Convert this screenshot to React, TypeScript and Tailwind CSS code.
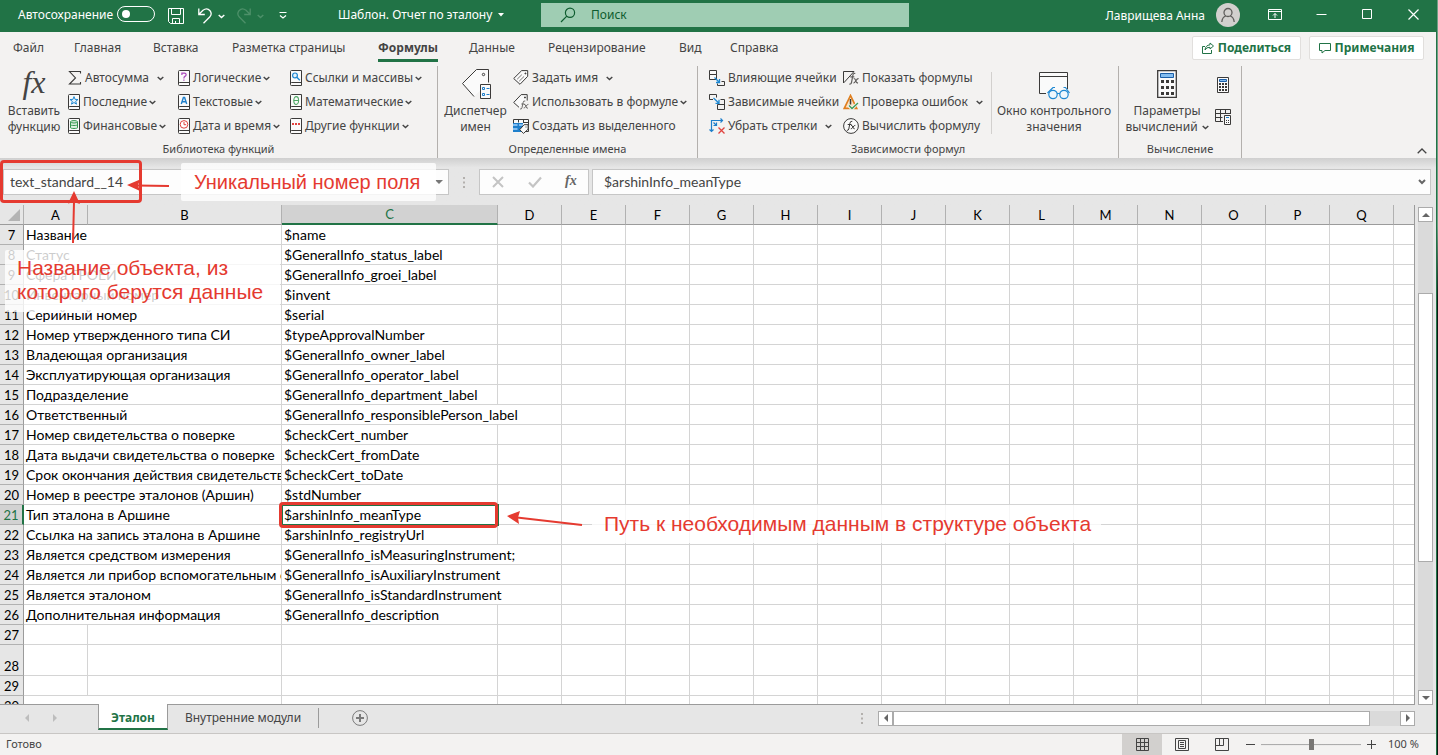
import type { ReactNode } from "react";

const UI_FONT = "font-['Noto_Sans','Open_Sans',sans-serif]";
const CELL_FONT = "font-['Lato','Open_Sans',sans-serif]";
const NOTE_FONT = "font-['Liberation_Sans',Arial,sans-serif]";

// ---------------------------------------------------------------- icons

function Chevron({ className = "" }: { className?: string }) {
  return (
    <svg viewBox="0 0 7 5" className={`h-[5px] w-[7px] shrink-0 ${className}`} fill="none" stroke="currentColor" strokeWidth="1.4">
      <path d="M.7 .9 3.5 3.6 6.3 .9" />
    </svg>
  );
}

function Triangle({ dir, className = "" }: { dir: "up" | "down" | "left" | "right"; className?: string }) {
  const paths = {
    up: "M0 6 4 2 8 6z",
    down: "M0 2 4 6 8 2z",
    left: "M6 0 2 4 6 8z",
    right: "M2 0 6 4 2 8z",
  };
  return (
    <svg viewBox="0 0 8 8" className={`size-2 shrink-0 ${className}`} fill="currentColor">
      <path d={paths[dir]} />
    </svg>
  );
}

function Book({ children }: { children: ReactNode }) {
  return (
    <svg viewBox="0 0 12 16" className="h-4 w-3 shrink-0" fill="none">
      <path d="M.5 1.5q0-1 1-1h10v15h-10q-1 0-1-1z" fill="#fafafa" stroke="#3b3a39" />
      <path d="M.5 13.5q0-1 1-1h10" stroke="#3b3a39" />
      {children}
    </svg>
  );
}

const sigmaIcon = (
  <svg viewBox="0 0 14 16" className="h-4 w-[14px] shrink-0" fill="none" stroke="#3b3a39" strokeWidth="1.1">
    <path d="M12.5 3.5v-2h-11l6 6.500-6 6h11v-2" />
  </svg>
);
const recentIcon = (
  <Book>
    <path d="M6 2.6 7.1 5.4 10 5.5 7.7 7.3 8.5 10.2 6 8.5 3.5 10.2 4.3 7.3 2 5.5 4.9 5.4z" stroke="#1e88d2" fill="#e3f1fb" />
  </Book>
);
const financeIcon = (
  <Book>
    <g stroke="#33964e" fill="#dff2e2">
      <path d="M2.5 3.8v6c0 .9 7 .9 7 0v-6" />
      <ellipse cx="6" cy="3.8" rx="3.5" ry="1.2" />
      <path d="M2.5 6.8c0 .9 7 .9 7 0" fill="none" />
    </g>
  </Book>
);
const logicIcon = (
  <Book>
    <path d="M3.9 5V3.2h2.6c2 0 2.2 2.4.4 3.2q-1 .5-1 2M5.9 9.4v1.4" stroke="#a846b9" strokeWidth="1.2" />
  </Book>
);
const textIcon = (
  <Book>
    <path d="M3.3 10 5.4 3.5h1.2L8.7 10M4.2 7.7h3.7" stroke="#1e7fcb" strokeWidth="1.4" />
  </Book>
);
const dateIcon = (
  <Book>
    <circle cx="6" cy="6.4" r="3.8" stroke="#e0433f" fill="#fff" />
    <path d="M6 4v2.7h2.2" stroke="#e0433f" />
  </Book>
);
const lookupIcon = (
  <Book>
    <circle cx="5" cy="5.4" r="2.4" stroke="#1e88d2" strokeWidth="1.2" fill="#e3f1fb" />
    <path d="M6.8 7.2 9.8 10.3" stroke="#1e88d2" strokeWidth="1.4" />
  </Book>
);
const mathIcon = (
  <Book>
    <ellipse cx="6.2" cy="6.5" rx="2.4" ry="3.9" stroke="#4fa866" strokeWidth="1.1" />
    <path d="M3.8 6.5h4.8" stroke="#4fa866" />
  </Book>
);
const moreIcon = (
  <Book>
    <path d="M2 5h2v2H2zM5 5h2v2H5zM8 5h2v2H8z" fill="#e0433f" />
  </Book>
);

const defineNameIcon = (
  <svg viewBox="0 0 16 16" className="size-4 shrink-0" fill="none" stroke="#3b3a39">
    <path d="M.7 8.5 8.7 .6h6v5.7L7 14.3z" fill="#fafafa" />
    <path d="M12 3h.9v.9H12z" />
    <path d="M4.2 9.2l4.6-4.5M6.2 11.2l4.9-4.8" stroke="#797775" />
  </svg>
);
const useInFormulaIcon = (
  <svg viewBox="0 0 16 16" className="size-4 shrink-0" fill="none" stroke="#3b3a39">
    <path d="M6 13.3.7 8.5 8.2 .6h6v6" fill="#fafafa" />
    <path d="M11.5 3h.9v.9h-.9z" />
    <path d="M12.3 7q-2-.6-2.3 1.8l-1 4.900q-.4 1.7-1.9 1.3M8.3 10h3M11 10.3q1.4-.3 1.9 2t2.1 1.9M15.4 10.4q-1-.3-2.4 1.8T10.7 14" stroke="#605e5c" strokeWidth=".9" />
  </svg>
);
const fromSelectionIcon = (
  <svg viewBox="0 0 16 16" className="size-4 shrink-0" fill="none">
    <path d="M.5 1.5h15v12H.5z" fill="#fafafa" stroke="#3b3a39" />
    <path d="M5.5 1.5v3M10.5 1.5v3M10 4.5h5.5" stroke="#3b3a39" />
    <path d="M0 5h10v9H0z" fill="#1e7fcb" />
    <path d="M0 6h4.500v2H0zM6 6h4v2H6zM0 10h4.500v2H0z" fill="#83bdf0" />
    <path d="m6.7 11.7 4.4-5h4v4.5l-4.600 4.2z" fill="#fafafa" stroke="#3b3a39" />
    <path d="M12.5 8.5h1v1h-1z" fill="#3b3a39" />
  </svg>
);
const precedentsIcon = (
  <svg viewBox="0 0 16 16" className="size-4 shrink-0" fill="none">
    <path d="M.5.5h7v4h-7zM.5 4.5h7v5h-7z" stroke="#3b3a39" fill="#fafafa" />
    <path d="M12.5 11.5h3v4h-7v-2" stroke="#3b3a39" />
    <path d="m5.5 7.5 5 5M10.5 9v3.5H7" stroke="#1e88d2" strokeWidth="1.3" />
  </svg>
);
const dependentsIcon = (
  <svg viewBox="0 0 16 16" className="size-4 shrink-0" fill="none">
    <path d="M4 5.5H.5v-5h7v3" stroke="#3b3a39" />
    <path d="M11.500 5.5h4v10h-7v-5h7" stroke="#3b3a39" />
    <path d="M4.5 4 10 9.3M10 5.8v3.5H6.5" stroke="#1e88d2" strokeWidth="1.3" />
  </svg>
);
const removeArrowsIcon = (
  <svg viewBox="0 0 16 16" className="size-4 shrink-0" fill="none">
    <path d="M2.5 14V2.5H14M11.5.5l2 2-2 2M.5 11.5l2 2 2-2M4.5 4.5l3 3M7.5 4.5v3h-3" stroke="#1e7fcb" strokeWidth="1.2" />
    <path d="m9.5 9.5 6 6m0-6-6 6" stroke="#e0433f" strokeWidth="1.3" />
  </svg>
);
const showFormulasIcon = (
  <svg viewBox="0 0 16 16" className="size-4 shrink-0" fill="none" stroke="#3b3a39">
    <path d="M.5 13V1.5H11M.8 12.8 11 1.5" />
    <path d="M12.3 3.5q-2-.8-2.5 2l-1.3 7q-.5 2-2.2 1.5M7.3 6.8h4M10.7 8.5q1.6-.2 2 2t2.3 2.7M15.6 8.7q-1.2-.4-2.7 2t-2.5 2.3" stroke="#605e5c" strokeWidth="1.2" />
  </svg>
);
const errorCheckIcon = (
  <svg viewBox="0 0 16 16" className="size-4 shrink-0" fill="none">
    <path d="M7.5 1.5 1.3 14.3h12.400z" fill="#fce3c6" stroke="#e07f1f" strokeWidth="1.700" />
    <path d="M7.5 5v5.5" stroke="#3b3a39" strokeWidth="1.5" />
    <path d="m5.5 11.5 3.5 3.500 6-6.5" stroke="#f3f2f1" strokeWidth="3" />
    <path d="m6 11.5 3 3 6-5.5" stroke="#3a9b57" strokeWidth="1.3" />
  </svg>
);
const evaluateIcon = (
  <svg viewBox="0 0 16 16" className="size-4 shrink-0" fill="none" stroke="#3b3a39">
    <circle cx="8" cy="8" r="7.4" fill="#fafafa" />
    <path d="M9.3 3.3q-2-.4-2.4 2L5.8 11q-.4 1.7-2 1.3M4.7 6.5h3.8M8 7.3q1.3-.2 1.8 1.7t1.9 1.8M12.3 7.4q-1-.3-2.3 1.7T7.8 10.8" />
  </svg>
);
const bigTagIcon = (
  <svg viewBox="0 0 32 32" className="size-8" fill="none" stroke="#3b3a39">
    <path d="m14 28.500-11.500-13 14-14h12v13" fill="#fafafa" />
    <circle cx="23.5" cy="6.5" r="1.2" />
    <path d="M20.5 16.5h10v14h-10z" fill="#fafafa" />
    <path d="M22.5 19.5h2v2h-2zM22.5 25.5h2v2h-2zM26.5 20.5h3M26.5 26.5h3" stroke="#1e7fcb" />
  </svg>
);
const watchIcon = (
  <svg viewBox="0 0 32 32" className="size-8" fill="none">
    <path d="M8 25.5H1.5v-21h28V21" fill="#fafafa" stroke="#3b3a39" />
    <path d="M1.5 8.5h28" stroke="#3b3a39" />
    <g stroke="#1e88d2" strokeWidth="1.2">
      <circle cx="15" cy="26.5" r="4.2" fill="#eef7fd" />
      <circle cx="26" cy="26.5" r="4.2" fill="#eef7fd" />
      <path d="M19 25.500h3M9.5 25l5.500-5.500h2M31.5 25l-4-5.5h-2" />
    </g>
  </svg>
);
const bigCalcIcon = (
  <svg viewBox="0 0 20 28" className="h-7 w-5" fill="none">
    <path d="M.7.7h18.600v26.600H.7z" fill="#fafafa" stroke="#3b3a39" strokeWidth="1.3" />
    <path d="M3.5 3.5h13v4h-13z" fill="#83bdf0" stroke="#1b5fa8" />
    <path
      d="M4 10h3v3H4zM9 10h3v3H9zM14 10h3v3h-3zM4 16h3v3H4zM9 16h3v3H9zM14 16h3v3h-3zM4 22h3v3H4zM9 22h3v3H9zM14 22h3v3h-3z"
      fill="#3b3a39"
    />
  </svg>
);
const smallCalcIcon = (
  <svg viewBox="0 0 12 16" className="h-4 w-3" fill="none">
    <path d="M.5.5h11v15H.5z" fill="#fafafa" stroke="#3b3a39" />
    <path d="M2.5 2.5h7v2h-7z" fill="#83bdf0" stroke="#1b5fa8" />
    <path
      d="M2 6h2v2H2zM5 6h2v2H5zM8 6h2v2H8zM2 9h2v2H2zM5 9h2v2H5zM8 9h2v2H8zM2 12h2v2H2zM5 12h2v2H5zM8 12h2v2H8z"
      fill="#3b3a39"
    />
  </svg>
);
const calcSheetIcon = (
  <svg viewBox="0 0 16 16" className="size-4" fill="none" stroke="#3b3a39">
    <path d="M8 12.5H.5V.5h15V5M.5 4.5h15M.5 8.5h7M5.5.5v12M10.5.5V5" />
    <path d="M9.5 6.5h6v9h-6z" fill="#fafafa" />
    <path d="M11 8.5h3" stroke="#1e7fcb" />
    <path d="M11 11h1v1h-1zM13 11h1v1h-1zM11 13h1v1h-1zM13 13h1v1h-1z" fill="#3b3a39" stroke="none" />
  </svg>
);

// ---------------------------------------------------------------- title bar

function TitleBar() {
  return (
    <header className="flex h-8 shrink-0 items-center bg-[#217346] text-xs text-white">
      <div className="flex w-[541px] shrink-0 items-center pl-[18px]">
        <label htmlFor="autosave" className="w-[99px] pb-0.5">Автосохранение</label>
        <input
          id="autosave"
          type="checkbox"
          className="mb-1 flex h-4 w-[38px] appearance-none items-center rounded-full border border-white pl-1 before:size-2 before:rounded-full before:bg-white"
        />
        <button type="button" aria-label="Сохранить" className="ml-[13px]">
          <svg viewBox="0 0 16 16" className="size-4" fill="none" stroke="currentColor">
            <path d="M.5.5h15v15h-13l-2-2zM3.5.5v6h9v-6M4.5 15.5v-5h7v5M7.5 13v2.5" />
          </svg>
        </button>
        <button type="button" aria-label="Отменить" className="ml-[14px] flex items-center gap-[6px]">
          <svg viewBox="0 0 14 16" className="h-4 w-[14px]" fill="none" stroke="currentColor" strokeWidth="1.3">
            <path d="M.8.5v6h6M1 6.3l4-4q4-3 7 .4 2.5 3.5-.3 6.3l-6.200 6.300" />
          </svg>
          <Chevron />
        </button>
        <button type="button" aria-label="Повторить" disabled className="ml-3 flex items-center gap-[6px] text-[#4d9069]">
          <svg viewBox="0 0 14 16" className="h-4 w-[14px]" fill="none" stroke="currentColor" strokeWidth="1.3">
            <path d="M13.2.5v6h-6M13 6.3l-4-4q-4-3-7 .4-2.500 3.500.3 6.300l6.200 6.300" />
          </svg>
          <Chevron />
        </button>
        <button type="button" aria-label="Настройка панели быстрого доступа" className="mb-0.5 ml-[15px]">
          <svg viewBox="0 0 8 8" className="size-2" fill="none" stroke="currentColor">
            <path d="M.5 1.5h7M1 4.5l3 2.5 3-2.5" strokeWidth="1.2" />
          </svg>
        </button>
        <button type="button" className="ml-[51px] flex items-center gap-[6px] whitespace-nowrap pb-0.5">
          Шаблон. Отчет по эталону
          <svg viewBox="0 0 6 4" className="h-1 w-[6px]" fill="currentColor"><path d="M0 0h6L3 3.5z" /></svg>
        </button>
      </div>
      <label className="mb-0.5 flex h-6 max-w-[368px] flex-1 items-center bg-[#9fcdb3] pl-[19px] text-[#0e5c2f]">
        <svg viewBox="0 0 16 16" className="size-4" fill="none" stroke="currentColor" strokeWidth="1.2">
          <circle cx="10" cy="5.8" r="4.6" />
          <path d="M6.8 9.2 1 15" />
        </svg>
        <input
          type="text"
          aria-label="Поиск"
          placeholder="Поиск"
          className="ml-[15px] min-w-0 flex-1 bg-transparent outline-none placeholder:text-[#0e5c2f]"
        />
      </label>
      <div className="ml-auto flex items-center pr-[17px]">
        <span className="mr-[11px] whitespace-nowrap">Лаврищева Анна</span>
        <button type="button" aria-label="Учётная запись" className="mb-0.5 flex size-6 items-center justify-center rounded-full bg-[#d2d0ce] text-[#605e5c]">
          <svg viewBox="0 0 16 16" className="size-4" fill="none" stroke="currentColor" strokeWidth="1.3">
            <circle cx="8" cy="5.5" r="4" />
            <path d="M1.8 15q.5-5 4-6M14.2 15q-.5-5-4-6" />
          </svg>
        </button>
        <button type="button" aria-label="Параметры отображения ленты" className="mb-1 ml-7">
          <svg viewBox="0 0 14 11" className="h-[11px] w-[14px]" fill="none" stroke="currentColor">
            <path d="M.5.5h13v10H.5zM.5 2.5h13M7 9V4.500M5 6.500l2-2 2 2" />
          </svg>
        </button>
        <button type="button" aria-label="Свернуть" className="mb-1 ml-[34px]">
          <svg viewBox="0 0 11 11" className="size-[11px]" fill="none" stroke="currentColor"><path d="M.5 5.5h10" /></svg>
        </button>
        <button type="button" aria-label="Развернуть" className="mb-1 ml-[35px]">
          <svg viewBox="0 0 11 11" className="size-[11px]" fill="none" stroke="currentColor"><path d="M.5.5h9v9h-9z" /></svg>
        </button>
        <button type="button" aria-label="Закрыть" className="mb-1 ml-[35px]">
          <svg viewBox="0 0 11 11" className="size-[11px]" fill="none" stroke="currentColor" strokeWidth="1.2"><path d="m.5.5 10 10m0-10-10 10" /></svg>
        </button>
      </div>
    </header>
  );
}

// ---------------------------------------------------------------- ribbon tabs

const TABS = [
  { label: "Файл", width: "w-[61px]" },
  { label: "Главная", width: "w-[79px]" },
  { label: "Вставка", width: "w-[79px]" },
  { label: "Разметка страницы", width: "w-[146px]" },
  { label: "Формулы", width: "w-[91px]", active: true },
  { label: "Данные", width: "w-[79px]" },
  { label: "Рецензирование", width: "w-[131px]" },
  { label: "Вид", width: "w-[51px]" },
  { label: "Справка", width: "w-[60px]" },
];

function RibbonTabs() {
  return (
    <nav className="flex h-8 shrink-0 items-center pl-[13px] text-xs text-[#444]">
      {TABS.map((tab) => (
        <div key={tab.label} className={`flex h-7 shrink-0 items-end ${tab.width}`}>
          <button
            type="button"
            className={
              tab.active
                ? "h-[26px] whitespace-nowrap border-b-3 border-[#217346] font-bold"
                : "h-[26px] whitespace-nowrap border-b-3 border-transparent"
            }
          >
            {tab.label}
          </button>
        </div>
      ))}
      <div className="ml-auto flex gap-2 pr-3 font-bold text-[#217346]">
        <button type="button" className="flex h-6 w-[109px] items-center justify-center gap-1 rounded-xs border border-[#e1dfdd] bg-white">
          <svg viewBox="0 0 12 12" className="size-3" fill="none" stroke="currentColor">
            <path d="M3 4.5H.5v7h9V8M8 1l3.5 3L8 7V5.3Q4.5 5 3 8q.5-4.8 5-5.2z" />
          </svg>
          Поделиться
        </button>
        <button type="button" className="flex h-6 w-[115px] items-center justify-center gap-1 rounded-xs border border-[#e1dfdd] bg-white">
          <svg viewBox="0 0 12 12" className="size-3" fill="none" stroke="currentColor">
            <path d="M.5 1.5h11v7H6L3 11V8.5H.5z" />
          </svg>
          Примечания
        </button>
      </div>
    </nav>
  );
}

// ---------------------------------------------------------------- ribbon

interface ToolProps {
  icon: ReactNode;
  label: string;
  menu?: boolean;
  wide?: boolean;
}

function Tool({ icon, label, menu, wide }: ToolProps) {
  return (
    <button type="button" className="flex h-6 items-center whitespace-nowrap">
      <span className="mr-[3px] flex">{icon}</span>
      {label}
      {menu && <Chevron className={wide ? "ml-2" : "ml-0.5"} />}
    </button>
  );
}

function ToolColumn({ tools, width }: { tools: ToolProps[]; width: string }) {
  return (
    <div className={`flex shrink-0 flex-col items-start ${width}`}>
      {tools.map((tool) => (
        <Tool key={tool.label} {...tool} />
      ))}
    </div>
  );
}

function BigTool({ icon, lines, menu, width }: { icon: ReactNode; lines: [string, string]; menu?: boolean; width: string }) {
  return (
    <button type="button" className={`flex shrink-0 flex-col items-center whitespace-nowrap pt-0.5 leading-4 ${width}`}>
      <span className="flex h-8 items-center">{icon}</span>
      <span className="mt-[3px]">{lines[0]}</span>
      <span className="flex items-center gap-1">
        {lines[1]}
        {menu && <Chevron />}
      </span>
    </button>
  );
}

function Group({ title, width, children }: { title: string; width: string; children: ReactNode }) {
  return (
    <section className={`flex shrink-0 flex-col border-r border-[#b3b0ad] ${width}`}>
      <div className="flex h-[76px]">{children}</div>
      <h2 className="text-center text-[11px] leading-[18px]">{title}</h2>
    </section>
  );
}

const LIBRARY_1: ToolProps[] = [
  { icon: sigmaIcon, label: "Автосумма", menu: true, wide: true },
  { icon: recentIcon, label: "Последние", menu: true },
  { icon: financeIcon, label: "Финансовые", menu: true },
];
const LIBRARY_2: ToolProps[] = [
  { icon: logicIcon, label: "Логические", menu: true },
  { icon: textIcon, label: "Текстовые", menu: true },
  { icon: dateIcon, label: "Дата и время", menu: true },
];
const LIBRARY_3: ToolProps[] = [
  { icon: lookupIcon, label: "Ссылки и массивы", menu: true },
  { icon: mathIcon, label: "Математические", menu: true },
  { icon: moreIcon, label: "Другие функции", menu: true },
];
const NAMES: ToolProps[] = [
  { icon: defineNameIcon, label: "Задать имя", menu: true, wide: true },
  { icon: useInFormulaIcon, label: "Использовать в формуле", menu: true },
  { icon: fromSelectionIcon, label: "Создать из выделенного" },
];
const AUDIT_1: ToolProps[] = [
  { icon: precedentsIcon, label: "Влияющие ячейки" },
  { icon: dependentsIcon, label: "Зависимые ячейки" },
  { icon: removeArrowsIcon, label: "Убрать стрелки", menu: true, wide: true },
];
const AUDIT_2: ToolProps[] = [
  { icon: showFormulasIcon, label: "Показать формулы" },
  { icon: errorCheckIcon, label: "Проверка ошибок", menu: true, wide: true },
  { icon: evaluateIcon, label: "Вычислить формулу" },
];

const fxIcon = <span className="pb-1 font-['Liberation_Serif',serif] text-[32px] italic leading-8">fx</span>;

function Ribbon() {
  return (
    <div className="flex h-[94px] shrink-0 pt-0.5 text-xs text-[#444]">
      <Group title="Библиотека функций" width="w-[438px]">
        <BigTool icon={fxIcon} lines={["Вставить", "функцию"]} width="w-[68px]" />
        <ToolColumn tools={LIBRARY_1} width="w-[110px]" />
        <ToolColumn tools={LIBRARY_2} width="w-[112px]" />
        <ToolColumn tools={LIBRARY_3} width="w-[147px]" />
      </Group>
      <Group title="Определенные имена" width="w-[260px]">
        <BigTool icon={bigTagIcon} lines={["Диспетчер", "имен"]} width="w-[75px]" />
        <ToolColumn tools={NAMES} width="w-[184px]" />
      </Group>
      <Group title="Зависимости формул" width="w-[421px]">
        <div className="w-[11px]" />
        <ToolColumn tools={AUDIT_1} width="w-[134px]" />
        <ToolColumn tools={AUDIT_2} width="w-[148px]" />
        <div className="my-1.5 w-px bg-[#d2d0ce]" />
        <BigTool icon={watchIcon} lines={["Окно контрольного", "значения"]} width="w-[124px]" />
      </Group>
      <Group title="Вычисление" width="w-[123px]">
        <BigTool icon={bigCalcIcon} lines={["Параметры", "вычислений"]} menu width="w-[96px]" />
        <div className="flex flex-col gap-4 pt-[11px]">
          <button type="button" aria-label="Пересчет" className="flex size-4 items-center justify-center">{smallCalcIcon}</button>
          <button type="button" aria-label="Произвести вычисления">{calcSheetIcon}</button>
        </div>
      </Group>
      <button type="button" aria-label="Свернуть ленту" className="mb-1 ml-auto self-end pr-[9px]">
        <svg viewBox="0 0 10 6" className="h-[6px] w-[10px]" fill="none" stroke="currentColor" strokeWidth="1.3">
          <path d="M.7 5.3 5 1l4.3 4.3" />
        </svg>
      </button>
    </div>
  );
}

// ---------------------------------------------------------------- formula bar

function GripDots() {
  return (
    <svg viewBox="0 0 2 11" className="h-[11px] w-0.5 shrink-0" fill="#b3b0ad">
      <path d="M0 0h2v2H0zM0 4.5h2v2H0zM0 9h2v2H0z" />
    </svg>
  );
}

function FormulaBar() {
  return (
    <div className={`flex h-[47px] shrink-0 items-start bg-linear-to-b from-[#cfcfcf] to-[#e6e6e6] to-20% pl-[3px] pr-[5px] pt-[11px] text-sm text-[#444] ${CELL_FONT}`}>
      <div className="flex h-[26px] w-[446px] shrink-0 items-center border border-[#c6c6c6] bg-[#fdfdfd] pl-1.5 pr-[5px]">
        <input aria-label="Имя" defaultValue="text_standard__14" className="min-w-0 flex-1 bg-transparent outline-none" />
        <button type="button" aria-label="Список имен"><Triangle dir="down" className="text-[#777]" /></button>
      </div>
      <div className="flex h-[26px] w-[30px] shrink-0 items-center justify-center"><GripDots /></div>
      <div className="mr-[3px] flex h-[26px] w-[110px] shrink-0 items-center border border-[#c6c6c6] bg-[#fdfdfd] pl-3">
        <button type="button" aria-label="Отмена" disabled>
          <svg viewBox="0 0 12 12" className="size-3" stroke="#c4c4c4" strokeWidth="2"><path d="m1 1 10 10m0-10L1 11" /></svg>
        </button>
        <button type="button" aria-label="Ввод" disabled className="ml-6">
          <svg viewBox="0 0 14 12" className="h-3 w-[14px]" fill="none" stroke="#c4c4c4" strokeWidth="2.2"><path d="m1 6.5 4 4 8-9" /></svg>
        </button>
        <button type="button" aria-label="Вставить функцию" className="ml-[23px] pb-0.5 font-['Liberation_Serif',serif] text-sm font-bold italic leading-5 text-[#666]">
          fx
        </button>
      </div>
      <div className="flex h-[26px] min-w-0 flex-1 items-center border border-[#c6c6c6] bg-[#fdfdfd] pl-[11px] pr-1">
        <input aria-label="Строка формул" defaultValue="$arshinInfo_meanType" className="min-w-0 flex-1 bg-transparent outline-none" />
        <button type="button" aria-label="Развернуть строку формул">
          <svg viewBox="0 0 8 6" className="h-[6px] w-2" fill="none" stroke="#666" strokeWidth="2"><path d="m1 1 3 3 3-3" /></svg>
        </button>
      </div>
    </div>
  );
}

// ---------------------------------------------------------------- sheet

interface SheetRow {
  n: number;
  label?: string;
  path?: string;
  overflows?: boolean;
}

const ROWS: SheetRow[] = [
  { n: 7, label: "Название", path: "$name" },
  { n: 8, label: "Статус", path: "$GeneralInfo_status_label" },
  { n: 9, label: "Сфера ГРОЕИ", path: "$GeneralInfo_groei_label" },
  { n: 10, label: "Инвентарный номер", path: "$invent" },
  { n: 11, label: "Серийный номер", path: "$serial" },
  { n: 12, label: "Номер утвержденного типа СИ", path: "$typeApprovalNumber" },
  { n: 13, label: "Владеющая организация", path: "$GeneralInfo_owner_label" },
  { n: 14, label: "Эксплуатирующая организация", path: "$GeneralInfo_operator_label" },
  { n: 15, label: "Подразделение", path: "$GeneralInfo_department_label" },
  { n: 16, label: "Ответственный", path: "$GeneralInfo_responsiblePerson_label", overflows: true },
  { n: 17, label: "Номер свидетельства о поверке", path: "$checkCert_number" },
  { n: 18, label: "Дата выдачи свидетельства о поверке", path: "$checkCert_fromDate" },
  { n: 19, label: "Срок окончания действия свидетельства", path: "$checkCert_toDate" },
  { n: 20, label: "Номер в реестре эталонов (Аршин)", path: "$stdNumber" },
  { n: 21, label: "Тип эталона в Аршине", path: "$arshinInfo_meanType" },
  { n: 22, label: "Ссылка на запись эталона в Аршине", path: "$arshinInfo_registryUrl" },
  { n: 23, label: "Является средством измерения", path: "$GeneralInfo_isMeasuringInstrument;", overflows: true },
  { n: 24, label: "Является ли прибор вспомогательным с", path: "$GeneralInfo_isAuxiliaryInstrument", overflows: true },
  { n: 25, label: "Является эталоном", path: "$GeneralInfo_isStandardInstrument", overflows: true },
  { n: 26, label: "Дополнительная информация", path: "$GeneralInfo_description" },
  { n: 27 },
  { n: 28 },
  { n: 29 },
  { n: 30, label: "" },
];

const SELECTED_ROW = 21;
const PLAIN_COLUMNS = ["D", "E", "F", "G", "H", "I", "J", "K", "L", "M", "N", "O", "P", "Q"];
const CELL = "border-b border-r border-[#d4d4d4] p-0";
const COL_HEAD = "h-5 border-b border-r border-b-[#9b9b9b] border-r-[#b1b1b1] p-0 font-normal";

function Sheet() {
  return (
    <table className={`w-full table-fixed border-separate border-spacing-0 text-sm leading-[18px] text-black ${CELL_FONT}`}>
      <colgroup>
        <col className="w-6" />
        <col className="w-16" />
        <col className="w-[194px]" />
        <col className="w-[216px]" />
        {PLAIN_COLUMNS.map((c) => (
          <col key={c} className="w-16" />
        ))}
        <col />
      </colgroup>
      <thead className="bg-[#e6e6e6] text-[13px]">
        <tr>
          <th className={COL_HEAD} aria-label="Выделить все">
            <svg viewBox="0 0 12 12" className="ml-2 size-3" fill="#b4b4b4"><path d="M12 0v12H0z" /></svg>
          </th>
          <th className={COL_HEAD}>A</th>
          <th className={COL_HEAD}>B</th>
          <th className="h-5 border-b-2 border-r border-b-[#217346] border-r-[#b1b1b1] bg-[#d2d2d2] p-0 font-normal text-[#217346]">C</th>
          {PLAIN_COLUMNS.map((c) => (
            <th key={c} className={COL_HEAD}>{c}</th>
          ))}
          <th className="h-5 border-b border-[#9b9b9b] p-0" />
        </tr>
      </thead>
      <tbody>
        {ROWS.map((row) => (
          <tr key={row.n} className={row.n === 28 ? "h-[31px] align-bottom" : "h-5 align-bottom"}>
            <th
              className={
                row.n === SELECTED_ROW
                  ? "border-b border-r-2 border-b-[#b1b1b1] border-r-[#217346] bg-[#d2d2d2] p-0 text-[13px] font-normal text-[#217346]"
                  : "border-b border-r border-b-[#b1b1b1] border-r-[#9b9b9b] bg-[#e6e6e6] p-0 text-[13px] font-normal"
              }
            >
              {row.n}
            </th>
            {row.label === undefined ? (
              <>
                <td className={CELL} />
                <td className={CELL} />
              </>
            ) : (
              <td colSpan={2} className={`${CELL} overflow-hidden whitespace-nowrap pl-0.5`}>{row.label}</td>
            )}
            <td className={`border-b border-[#d4d4d4] p-0 pl-0.5 whitespace-nowrap ${row.overflows ? "" : "border-r"}`}>
              {row.path}
            </td>
            {PLAIN_COLUMNS.map((c) => (
              <td key={c} className={CELL} />
            ))}
            <td className="border-b border-[#d4d4d4] p-0" />
          </tr>
        ))}
      </tbody>
    </table>
  );
}

const SCROLL_BUTTON = "flex items-center justify-center border border-[#ababab] bg-white text-[#666]";

function VerticalScroll() {
  return (
    <div className="flex w-[21px] shrink-0 flex-col pl-[3px] pr-[3px] pt-0.5">
      <button type="button" aria-label="Вверх" className={`h-[15px] shrink-0 ${SCROLL_BUTTON}`}><Triangle dir="up" /></button>
      <div className="flex flex-1 flex-col bg-[#dadada]">
        <div className="grow-[71]" />
        <div className="grow-[269] border border-[#ababab] bg-white" />
        <div className="grow-[129]" />
      </div>
      <button type="button" aria-label="Вниз" className={`h-[15px] shrink-0 ${SCROLL_BUTTON}`}><Triangle dir="down" /></button>
    </div>
  );
}

function SheetTabs() {
  return (
    <div className="flex h-7 shrink-0 items-start pr-[21px] text-xs text-[#444]">
      <div className="flex h-[26px] w-[98px] shrink-0 items-center gap-5 pl-[23px] text-[#bdbdbd]">
        <button type="button" aria-label="Предыдущий лист" disabled><Triangle dir="left" /></button>
        <button type="button" aria-label="Следующий лист" disabled><Triangle dir="right" /></button>
      </div>
      <button type="button" className="-mt-px h-[26px] w-[70px] border-x border-b-2 border-x-[#9b9b9b] border-b-[#217346] bg-white pt-1 font-bold text-[#217346]">
        Эталон
      </button>
      <button type="button" className="h-[26px] w-[150px] whitespace-nowrap">Внутренние модули</button>
      <div className="mt-[3px] h-5 w-px bg-[#9b9b9b]" />
      <button type="button" aria-label="Новый лист" className="ml-[33px] mt-[5px]">
        <svg viewBox="0 0 16 16" className="size-4" fill="none" stroke="#7a7a7a">
          <circle cx="8" cy="8" r="7.4" />
          <path d="M8 4v8M4 8h8" strokeWidth="2" />
        </svg>
      </button>
      <div className="ml-auto flex h-[26px] w-[554px] items-center">
        <GripDots />
        <button type="button" aria-label="Влево" className={`ml-[15px] h-[15px] w-[15px] shrink-0 ${SCROLL_BUTTON}`}><Triangle dir="left" /></button>
        <div className="flex h-[15px] flex-1 bg-[#dadada]">
          <div className="w-[94%] border border-[#ababab] bg-white" />
        </div>
        <button type="button" aria-label="Вправо" className={`h-[15px] w-[15px] shrink-0 ${SCROLL_BUTTON}`}><Triangle dir="right" /></button>
      </div>
    </div>
  );
}

function StatusBar() {
  return (
    <footer className="flex h-[22px] shrink-0 items-center border-t border-[#c8c6c4] bg-[#f3f2f1] pr-4 text-[11px] text-[#444]">
      <span className="pl-1.5">Готово</span>
      <div className="ml-auto flex h-full items-center">
        <button type="button" aria-label="Обычный" className="flex h-full w-10 items-center justify-center bg-[#d2d0ce]">
          <svg viewBox="0 0 13 13" className="size-[13px]" fill="none" stroke="currentColor">
            <path d="M.5.5h12v12H.5zM4.5.5v12M8.5.5v12M.5 4.5h12M.5 8.5h12" />
          </svg>
        </button>
        <button type="button" aria-label="Разметка страницы" className="flex h-full w-10 items-center justify-center">
          <svg viewBox="0 0 14 13" className="h-[13px] w-[14px]" fill="none" stroke="currentColor">
            <path d="M.5.5h13v12H.5zM3.5 2.5h7v8h-7zM5 4.5h4M5 6.5h4M5 8.5h4" />
          </svg>
        </button>
        <button type="button" aria-label="Страничный режим" className="flex h-full w-10 items-center justify-center">
          <svg viewBox="0 0 14 13" className="h-[13px] w-[14px]" fill="none" stroke="currentColor">
            <path d="M.5.5h13v12H.5zM4.5.5v7M8.5.5v7M.5 7.5h8" />
          </svg>
        </button>
        <button type="button" aria-label="Уменьшить" className="ml-1">
          <svg viewBox="0 0 9 9" className="size-[9px]" stroke="currentColor"><path d="M0 4.5h9" /></svg>
        </button>
        <input
          type="range"
          aria-label="Масштаб"
          min={0}
          max={100}
          defaultValue={50}
          className="mx-[6px] h-3 w-[100px] appearance-none bg-linear-to-b from-transparent from-45% via-[#a6a6a6] via-45% to-transparent to-55% [&::-webkit-slider-thumb]:h-[11px] [&::-webkit-slider-thumb]:w-[5px] [&::-webkit-slider-thumb]:appearance-none [&::-webkit-slider-thumb]:bg-[#797775]"
        />
        <button type="button" aria-label="Увеличить">
          <svg viewBox="0 0 9 9" className="size-[9px]" stroke="currentColor"><path d="M0 4.5h9M4.5 0v9" /></svg>
        </button>
        <button type="button" className="ml-3 w-8 whitespace-nowrap text-left">100 %</button>
      </div>
    </footer>
  );
}

// ---------------------------------------------------------------- notes drawn over the sheet

const NOTE = `absolute whitespace-nowrap rounded-xs bg-white/80 text-[#e53a30] ${NOTE_FONT}`;

function Notes() {
  return (
    <div className="pointer-events-none absolute inset-0 overflow-hidden">
      <p className={`${NOTE} left-[181px] top-[163px] h-[38px] w-[255px] pl-[13px] text-xl leading-[38px]`}>
        Уникальный номер поля
      </p>
      <p className={`${NOTE} left-[5px] top-[250px] h-[62px] w-[275px] pl-3 pt-1.5 text-[21px] leading-6`}>
        Название объекта, из
        <br />
        которого берутся данные
      </p>
      <p className={`${NOTE} left-[592px] top-[505px] h-[38px] w-[509px] pl-3 text-[21px] leading-[38px]`}>
        Путь к необходимым данным в структуре объекта
      </p>
      <div className="absolute left-0 top-[160px] h-[43px] w-[142px] rounded border-3 border-[#e53a30]" />
      <div className="absolute left-[281px] top-[504px] h-[22px] w-[218px] border-2 border-[#217346]" />
      <div className="absolute left-[279px] top-[502px] h-[26px] w-[219px] rounded border-3 border-[#e53a30]" />
      <svg className="absolute left-0 top-0 h-[600px] w-[640px]" fill="#e53a30" stroke="#e53a30">
        <path d="M169 186 137 185.500M73 243 74 202M582 525 517 517.500" strokeWidth="2" />
        <path d="M127 185 140 179.500 138 185.500 140 191zM74 191 68 203.500 74 202 80 204zM507 516 520 511 518 517.500 519 524z" stroke="none" />
      </svg>
    </div>
  );
}

export default function App() {
  return (
    <div className={`relative flex h-screen overflow-hidden bg-[#f3f2f1] ${UI_FONT}`}>
      <div className="flex min-w-0 flex-1 flex-col">
        <TitleBar />
        <RibbonTabs />
        <Ribbon />
        <FormulaBar />
        <main className="flex min-h-0 flex-1 flex-col bg-[#e6e6e6]">
          <div className="flex min-h-0 flex-1">
            <div className="min-w-0 flex-1 overflow-hidden border-b border-r border-[#9b9b9b] bg-white">
              <Sheet />
            </div>
            <VerticalScroll />
          </div>
          <SheetTabs />
        </main>
        <StatusBar />
      </div>
      <div className="w-0.5 shrink-0 border-l border-[#217346] bg-linear-to-b from-[#6f9f85] from-30% to-[#0b1a12] to-40%" />
      <Notes />
    </div>
  );
}
